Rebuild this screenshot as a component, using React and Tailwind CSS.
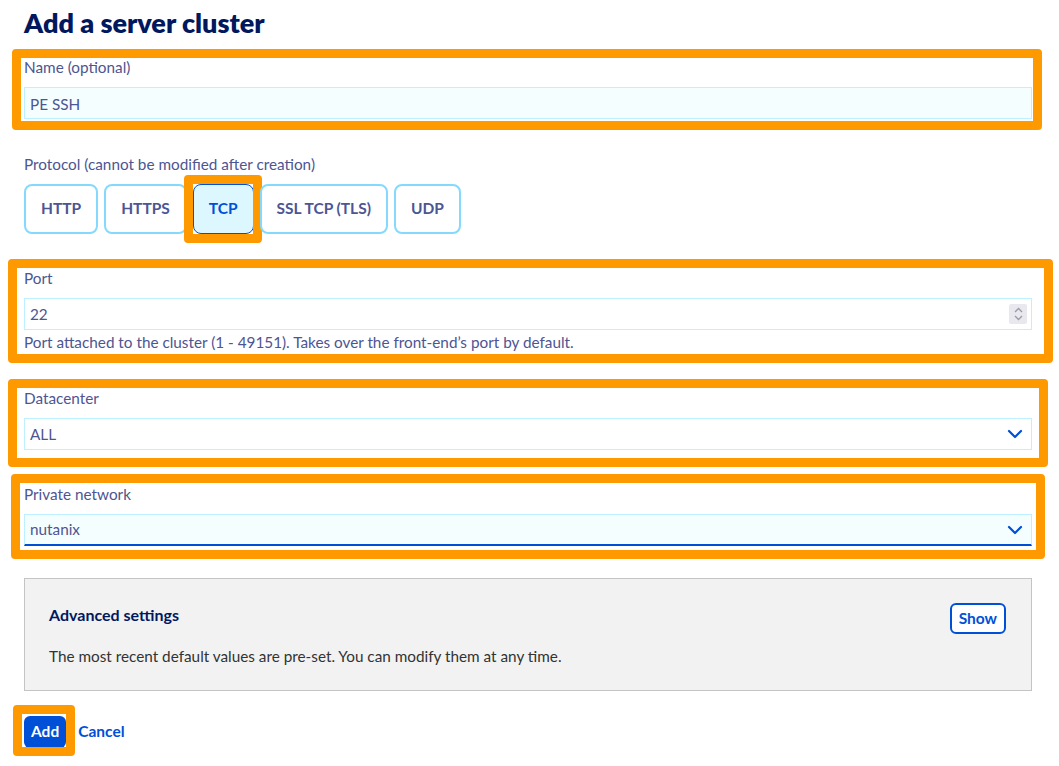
import React, { useState } from 'react';

const font = { fontFamily: 'Lato, "Open Sans", sans-serif' };

// orange highlight drawn over a field, as in the annotated screenshot
const Mark = ({ className }) => (
    <div className={`absolute pointer-events-none border-[9px] border-[#ff9900] rounded-[4px] ${className}`} />
);

const Chevron = () => (
    <svg width="16" height="10" viewBox="0 0 16 10" className="text-[#0050d7]">
        <path d="M2 2 L8 8 L14 2" fill="none" stroke="currentColor" strokeWidth="2.2" strokeLinecap="round" strokeLinejoin="round" />
    </svg>
);

const Spinner = () => (
    <div className="w-[18px] h-[20px] bg-[#e8e8ee] rounded-[2px] flex flex-col items-center justify-center gap-[2px]">
        <svg width="9" height="6" viewBox="0 0 9 6"><path d="M1 5 L4.5 1.5 L8 5" fill="none" stroke="#9a9aa8" strokeWidth="1.3" /></svg>
        <svg width="9" height="6" viewBox="0 0 9 6"><path d="M1 1 L4.5 4.5 L8 1" fill="none" stroke="#9a9aa8" strokeWidth="1.3" /></svg>
    </div>
);

const protocols = ['HTTP', 'HTTPS', 'TCP', 'SSL TCP (TLS)', 'UDP'];

export default function App() {
    const [protocol, setProtocol] = useState('TCP');

    return (
        <div className="min-h-screen bg-white pl-6 pt-[3px]" style={font}>
            <div className="w-[1008px]">
                <h1 className="text-[27px] leading-[40px] font-extrabold text-[#00185e]">Add a server cluster</h1>

                {/* Name */}
                <div className="relative mt-[14px]">
                    <Mark className="-top-[8px] -bottom-[11px] -left-[12px] -right-[10px]" />
                    <label className="block text-[15.3px] leading-[20px] text-[#4d5592]">Name (optional)</label>
                    <div className="mt-[10px] h-[32px] border border-[#bef1ff] bg-[#f5feff] flex items-center px-[5px] pt-[2px] text-[15.3px] text-[#4d5592]">
                        PE SSH
                    </div>
                </div>

                {/* Protocol */}
                <div className="mt-[35px] text-[15.3px] leading-[20px] text-[#4d5592]">Protocol (cannot be modified after creation)</div>
                <div className="mt-[10px] flex gap-[6px]">
                    {protocols.map((p) => {
                        const active = p === protocol;
                        return (
                            <div key={p} className="relative">
                                {active && <Mark className="-top-[9px] -bottom-[9px] -left-[9px] -right-[8px]" />}
                                <button
                                    onClick={() => setProtocol(p)}
                                    className={`h-[50px] px-[15px] rounded-[8px] text-[15.5px] font-bold ${active
                                        ? 'border border-[#0050d7] bg-[#ddf7ff] text-[#0050d7]'
                                        : 'border-2 border-[#85d9fd] bg-white text-[#4d5592]'}`}
                                >
                                    {p}
                                </button>
                            </div>
                        );
                    })}
                </div>

                {/* Port */}
                <div className="relative mt-[34px]">
                    <Mark className="-top-[9px] -bottom-[11px] -left-[16px] -right-[21px]" />
                    <label className="block text-[15.3px] leading-[20px] text-[#4d5592]">Port</label>
                    <div className="mt-[10px] h-[32px] border border-[#bef1ff] bg-white flex items-center justify-between pl-[5px] pr-[4px] text-[15.3px] text-[#4d5592]">
                        <span>22</span>
                        <Spinner />
                    </div>
                    <div className="mt-[2px] text-[15.3px] leading-[20px] text-[#4d5592]">
                        Port attached to the cluster (1 - 49151). Takes over the front-end’s port by default.
                    </div>
                </div>

                {/* Datacenter */}
                <div className="relative mt-[36px]">
                    <Mark className="-top-[9px] -bottom-[17px] -left-[16px] -right-[16px]" />
                    <label className="block text-[15.3px] leading-[20px] text-[#4d5592]">Datacenter</label>
                    <div className="mt-[10px] h-[32px] border border-[#bef1ff] bg-white flex items-center justify-between pl-[5px] pr-[8px] text-[15.3px] text-[#4d5592]">
                        <span>ALL</span>
                        <Chevron />
                    </div>
                </div>

                {/* Private network */}
                <div className="relative mt-[34px]">
                    <Mark className="-top-[10px] -bottom-[13px] -left-[13px] -right-[13px]" />
                    <label className="block text-[15.3px] leading-[20px] text-[#4d5592]">Private network</label>
                    <div className="mt-[10px] h-[32px] border border-[#bef1ff] border-b-2 border-b-[#0050d7] bg-[#f5feff] flex items-center justify-between pl-[5px] pr-[8px] text-[15.3px] text-[#4d5592]">
                        <span>nutanix</span>
                        <Chevron />
                    </div>
                </div>

                {/* Advanced settings */}
                <div className="mt-[32px] h-[113px] border border-[#c4c4c4] bg-[#f2f2f2] pl-[24px] pr-[25px] flex flex-col">
                    <div className="mt-[24px] flex items-start justify-between">
                        <span className="mt-[2px] text-[16px] leading-[20px] font-bold text-[#00185e]">Advanced settings</span>
                        <button className="h-[31px] px-[7px] rounded-[6px] border-2 border-[#0050d7] bg-white text-[15.5px] font-bold text-[#0050d7]">
                            Show
                        </button>
                    </div>
                    <p className="mt-[12px] text-[15.3px] leading-[20px] text-[#333]">
                        The most recent default values are pre-set. You can modify them at any time.
                    </p>
                </div>

                {/* Actions */}
                <div className="mt-[25px] flex items-center gap-[12px]">
                    <div className="relative">
                        <Mark className="-top-[11px] -bottom-[8px] -left-[11px] -right-[9px]" />
                        <button className="h-[32px] px-[7px] rounded-[6px] bg-[#0050d7] text-white text-[15.5px] font-bold">Add</button>
                    </div>
                    <button className="text-[15.5px] font-bold text-[#0050d7]">Cancel</button>
                </div>
            </div>
        </div>
    );
}
